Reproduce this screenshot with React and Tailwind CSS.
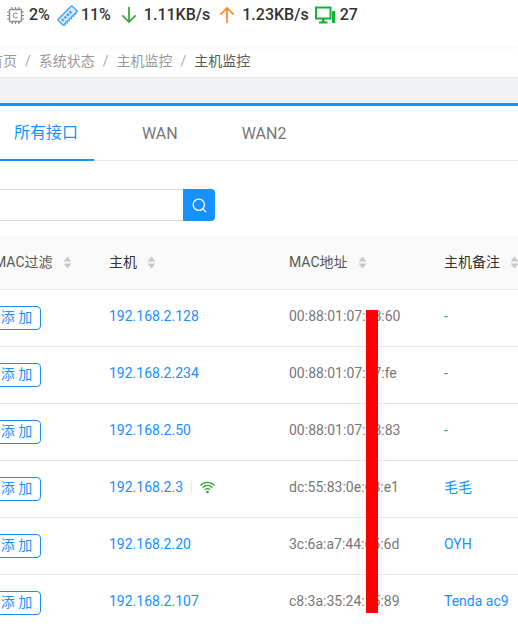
import React from 'react';
import { Search } from 'lucide-react';

const rows = [
  { ip: '192.168.2.128', mac: '00:88:01:07:38:60', note: '-', noteBlue: true },
  { ip: '192.168.2.234', mac: '00:88:01:07:37:fe', note: '-', noteBlue: false },
  { ip: '192.168.2.50', mac: '00:88:01:07:38:83', note: '-', noteBlue: true },
  { ip: '192.168.2.3', mac: 'dc:55:83:0e:68:e1', note: '毛毛', noteBlue: true, wifi: true },
  { ip: '192.168.2.20', mac: '3c:6a:a7:44:65:6d', note: 'OYH', noteBlue: true },
  { ip: '192.168.2.107', mac: 'c8:3a:35:24:15:89', note: 'Tenda ac9', noteBlue: true },
];

function SortIcon() {
  return (
    <svg width="9" height="13" viewBox="0 0 9 13" className="shrink-0 fill-[#c8c8c8]">
      <path d="M4.5 0.5 L8.5 5.5 H0.5 Z" />
      <path d="M4.5 12.5 L8.5 7.5 H0.5 Z" />
    </svg>
  );
}

function ChipIcon() {
  return (
    <svg width="17" height="17" viewBox="0 0 17 17" className="shrink-0">
      <rect x="2.5" y="2.5" width="12" height="12" rx="1" fill="#fff" stroke="#8c8c8c" strokeWidth="1.4" />
      <path d="M5 0v2.5M8.5 0v2.5M12 0v2.5M5 14.5V17M8.5 14.5V17M12 14.5V17M0 5h2.5M0 8.5h2.5M0 12h2.5M14.5 5H17M14.5 8.5H17M14.5 12H17" stroke="#8c8c8c" strokeWidth="1.2" />
      <path d="M10.3 6.8a2.4 2.4 0 1 0 0 3.4" fill="none" stroke="#777" strokeWidth="1" />
    </svg>
  );
}

function RamIcon() {
  return (
    <svg width="21" height="21" viewBox="0 0 21 21" className="shrink-0">
      <g transform="rotate(-45 10.5 10.5)">
        <rect x="0.5" y="6.5" width="20" height="8" rx="0.8" fill="#d6ecff" stroke="#3ba1f5" strokeWidth="1.3" />
        <path d="M3 9h2.2v2.6H3zM6.6 9h2.2v2.6H6.6zM10.2 9h2.2v2.6h-2.2zM13.8 9H16v2.6h-2.2z" fill="#3ba1f5" />
        <path d="M2 14.5v2M5 14.5v2M8 14.5v2M11 14.5v2M14 14.5v2M17 14.5v2" stroke="#3ba1f5" strokeWidth="1" />
      </g>
    </svg>
  );
}

function MonitorIcon() {
  return (
    <svg width="20" height="18" viewBox="0 0 20 18" className="shrink-0">
      <path d="M1 1.5h14.5v11H1z" fill="none" stroke="#16b13a" strokeWidth="2" />
      <path d="M4 15.5h8.5v2H4zM7 13h2.5v3H7z" fill="#16b13a" />
      <path d="M17 5h3v12h-3z" fill="#16b13a" />
    </svg>
  );
}

function WifiIcon() {
  return (
    <svg width="15" height="13" viewBox="0 0 15 13" fill="none" stroke="#2ea32e" strokeWidth="1.2" strokeLinecap="round">
      <path d="M0.8 4a9.6 9.6 0 0 1 13.4 0" />
      <path d="M3 6.3a6.4 6.4 0 0 1 9 0" />
      <path d="M5.2 8.6a3.2 3.2 0 0 1 4.6 0" />
      <circle cx="7.5" cy="11" r="0.7" fill="#2ea32e" />
    </svg>
  );
}

function ArrowDown({ color }) {
  return (
    <svg width="16" height="18" viewBox="0 0 18 20" fill="none" stroke={color} strokeWidth="2" className="shrink-0">
      <path d="M9 1v17M1.5 10.5 9 18l7.5-7.5" />
    </svg>
  );
}

function ArrowUp({ color }) {
  return (
    <svg width="16" height="18" viewBox="0 0 18 20" fill="none" stroke={color} strokeWidth="2" className="shrink-0">
      <path d="M9 19V2M1.5 9.5 9 2l7.5 7.5" />
    </svg>
  );
}

function HeaderCell({ children, dark, className }) {
  return (
    <div className={`flex items-center gap-[10px] ${dark ? 'text-[#333]' : 'text-[#595959]'} ${className || ''}`}>
      <span>{children}</span>
      <SortIcon />
    </div>
  );
}

export default function App() {
  return (
    <div className="relative h-[631px] w-[518px] overflow-hidden bg-white font-['Roboto','Noto_Sans_CJK_SC',sans-serif] text-[14px]">
      {/* 顶部状态栏 */}
      <div className="flex h-[46px] items-start pl-[7px] pt-[5px] text-[16px] font-medium text-[#333] shadow-[0_1px_4px_rgba(0,0,0,0.06)]">
        <div className="flex items-center h-5">
          <ChipIcon />
          <span className="ml-[5px]">2%</span>
          <span className="ml-[7px]"><RamIcon /></span>
          <span className="ml-[3px]">11%</span>
          <span className="ml-[10px]"><ArrowDown color="#3aa63a" /></span>
          <span className="ml-[7px]">1.11KB/s</span>
          <span className="ml-[9px]"><ArrowUp color="#fa8c2e" /></span>
          <span className="ml-[7px]">1.23KB/s</span>
          <span className="ml-[6px]"><MonitorIcon /></span>
          <span className="ml-[5px]">27</span>
        </div>
      </div>

      {/* 面包屑 */}
      <div className="flex h-[32px] items-center -ml-[11px] border-b border-[#e8e8e8] text-[#999]">
        <span>首页</span>
        <span className="mx-[8px] text-[#aaa]">/</span>
        <span>系统状态</span>
        <span className="mx-[8px] text-[#aaa]">/</span>
        <span>主机监控</span>
        <span className="mx-[8px] text-[#aaa]">/</span>
        <span className="text-[#595959]">主机监控</span>
      </div>

      <div className="h-[25px] bg-[#f0f2f5]" />

      {/* 标签页 */}
      <div className="border-t-[3px] border-[#1890ff]">
        <div className="flex h-[55px] border-b border-[#e8e8e8] text-[16px]">
          <div className="flex w-[94px] items-center pl-[14px] pt-px border-b-2 -mb-px border-[#1890ff] text-[#1890ff]">所有接口</div>
          <div className="ml-[48px] flex items-center pt-px text-[#777]">WAN</div>
          <div className="ml-[64px] flex items-center pt-px text-[#777]">WAN2</div>
        </div>
      </div>

      {/* 搜索 */}
      <div className="mt-[28px] flex h-[32px]">
        <div className="w-[183px] border-y border-[#d9d9d9]" />
        <div className="flex w-[32px] items-center justify-center rounded-r bg-[#1890ff]">
          <Search size={17} color="#fff" strokeWidth={1.8} />
        </div>
      </div>

      {/* 表格 */}
      <div className="mt-[15px]">
        <div className="grid h-[54px] grid-cols-[109px_180px_155px_1fr] items-center border-b border-[#e8e8e8] bg-[#fafafa] whitespace-nowrap">
          <HeaderCell className="-ml-[6px]">MAC过滤</HeaderCell>
          <HeaderCell dark>主机</HeaderCell>
          <HeaderCell>MAC地址</HeaderCell>
          <HeaderCell dark>主机备注</HeaderCell>
        </div>
        {rows.map((row) => (
          <div key={row.ip} className="grid h-[57px] grid-cols-[109px_180px_155px_1fr] items-center border-b border-[#e8e8e8] pb-[3px] whitespace-nowrap">
            <div className="mt-[2px]">
              <span className="-ml-[10px] flex h-6 w-[51px] items-center justify-center rounded border border-[#1890ff] pl-[2px] text-[#1890ff] whitespace-pre">添 加</span>
            </div>
            <div className="flex items-center text-[#1890ff]">
              <span>{row.ip}</span>
              {row.wifi && (
                <span className="ml-[8px] flex items-center gap-[8px]">
                  <span className="h-[13px] w-px bg-[#e8e8e8]" />
                  <WifiIcon />
                </span>
              )}
            </div>
            <div className="text-[#777]">{row.mac}</div>
            <div className={row.noteBlue ? 'text-[#1890ff]' : 'text-[#777]'}>{row.note}</div>
          </div>
        ))}
      </div>

      {/* 红色遮挡条 */}
      <div className="absolute left-[366px] top-[310px] h-[303px] w-3 bg-[#ff0000]" />
    </div>
  );
}
